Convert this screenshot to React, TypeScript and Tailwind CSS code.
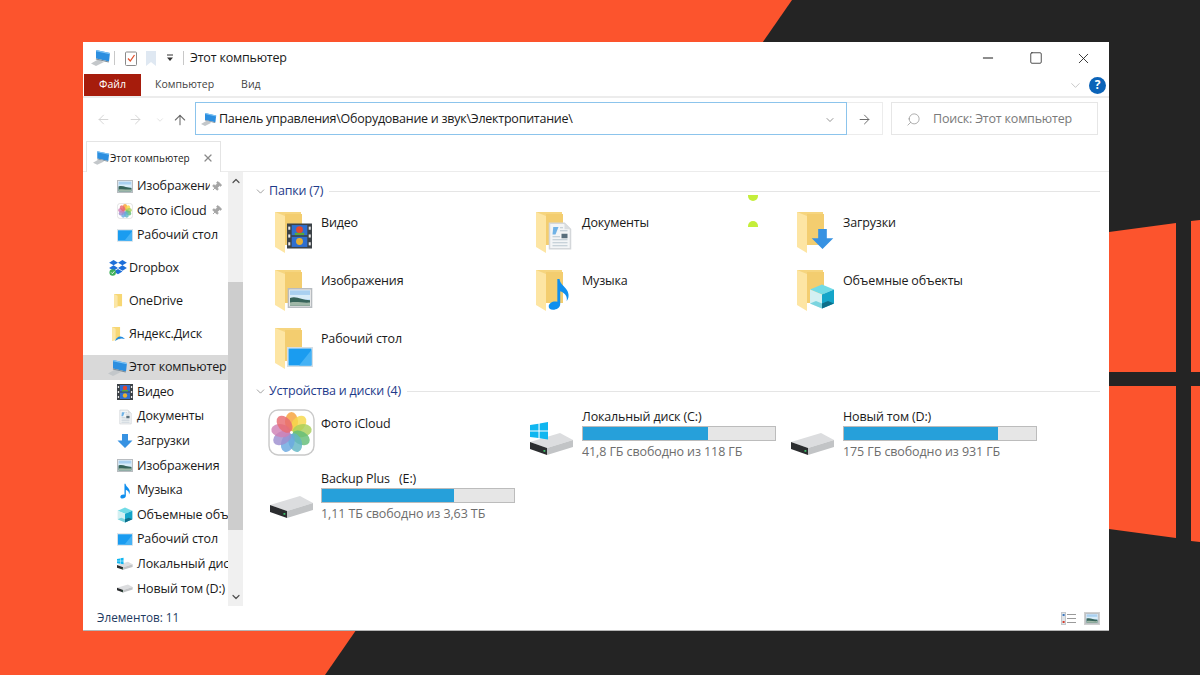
import React from 'react';
import { ArrowLeft, ArrowRight, ArrowUp, ChevronDown, ChevronUp, Minus, Pin, Search, Square, X } from 'lucide-react';

const font = { fontFamily: '"Open Sans", "Noto Sans", sans-serif' };

function Pc({ className = '' }: { className?: string }) {
  return (
    <svg viewBox="0 0 20 16" className={className}>
      <path d="M0 13.5 L7 9.5 L13 12 L5 16 Z" fill="#c3c7ca" />
      <path d="M5 0 L19 3 L18 11.5 L5 8.5 Z" fill="#2c8fe0" />
      <path d="M5 0 L19 3 L18.9 4.2 L5 1.2 Z" fill="#7fc4f5" />
      <path d="M5 8.5 L18 11.5 L17.6 12.4 L4.8 9.4 Z" fill="#7d8c97" />
    </svg>
  );
}

function Pictures({ className = '' }: { className?: string }) {
  return (
    <svg viewBox="0 0 16 13" className={className}>
      <rect x="0.5" y="0.5" width="15" height="12" fill="#f4f4f4" stroke="#b8bcc0" />
      <rect x="1.5" y="1.5" width="13" height="10" fill="#a9d0f0" />
      <rect x="1.5" y="4.5" width="13" height="3" fill="#d8ecf8" />
      <path d="M1.5 6.5 C6 5 9 8 14.5 8 V11.5 H1.5 Z" fill="#37645a" />
      <path d="M1.5 9.5 C6 8.5 10 10 14.5 9.5 V11.5 H1.5 Z" fill="#9fb7a7" />
    </svg>
  );
}

function Film({ className = '' }: { className?: string }) {
  return (
    <svg viewBox="0 0 16 16" className={className}>
      <rect width="16" height="16" fill="#3c4247" />
      <rect x="3" y="1" width="10" height="6.5" fill="#2f6fd0" />
      <rect x="3" y="8.5" width="10" height="6.5" fill="#2f6fd0" />
      <circle cx="8" cy="4" r="2.2" fill="#e2482e" />
      <circle cx="8" cy="11.5" r="2.2" fill="#e8b032" />
      <rect x="5" y="6" width="6" height="1.4" fill="#58a83c" />
      <rect x="0.8" y="2" width="1.3" height="2" fill="#e8e8e8" />
      <rect x="0.8" y="7" width="1.3" height="2" fill="#e8e8e8" />
      <rect x="0.8" y="12" width="1.3" height="2" fill="#e8e8e8" />
      <rect x="13.9" y="2" width="1.3" height="2" fill="#e8e8e8" />
      <rect x="13.9" y="7" width="1.3" height="2" fill="#e8e8e8" />
      <rect x="13.9" y="12" width="1.3" height="2" fill="#e8e8e8" />
    </svg>
  );
}

function Doc({ className = '' }: { className?: string }) {
  return (
    <svg viewBox="0 0 16 18" className={className}>
      <path d="M1 0.5 H11 L15 4.5 V17.5 H1 Z" fill="#f3f5f6" stroke="#d4d7da" />
      <path d="M11 0.5 L15 4.5 H11 Z" fill="#d9dde0" />
      <path d="M3.5 3 H7 L5 8 H3 Z" fill="#6fb2e6" />
      <path d="M3 9.5 H8 M3 11.5 H13 M3 13.5 H13 M3 15.5 H13 M8 3.5 H10 M8 5.5 H13" stroke="#b9c6d0" strokeWidth="0.8" />
      <rect x="9" y="7.5" width="4" height="3" fill="#596f7c" />
    </svg>
  );
}

function Down({ className = '' }: { className?: string }) {
  return (
    <svg viewBox="0 0 16 16" className={className}>
      <path d="M5 1 H11 V7.5 H15.5 L8 15 L0.5 7.5 H5 Z" fill="#3792e2" />
    </svg>
  );
}

function Note({ className = '' }: { className?: string }) {
  return (
    <svg viewBox="0 0 16 22" className={className}>
      <path d="M6.5 0.5 H8 C8.5 4 11 5 13 8 C15 11 14.5 14 13 16 C13.5 13 12.5 10.5 8.5 9 V18 C8.5 20.5 6 22 3.5 22 C1.5 22 0.3 20.8 0.5 19.3 C0.8 17 3.8 15.6 6.5 16.4 Z" fill="#0f8fee" />
    </svg>
  );
}

function Cube({ className = '' }: { className?: string }) {
  return (
    <svg viewBox="0 0 26 26" className={className}>
      <path d="M13 1 L25 6 L13 11 L1 6 Z" fill="#71dbe6" />
      <path d="M1 6 L13 11 V25 L1 20 Z" fill="#d3f0f2" />
      <path d="M25 6 L13 11 V25 L25 20 Z" fill="#14a5c9" />
      <path d="M1 20 L7 17.5 L13 20 V25 Z" fill="#7ad4df" />
      <path d="M25 20 L19 17.5 L13 20 V25 Z" fill="#0d6f8a" />
    </svg>
  );
}

function Desktop({ className = '' }: { className?: string }) {
  return (
    <svg viewBox="0 0 26 20" className={className}>
      <rect x="0.5" y="0.5" width="25" height="19" fill="#e8eef2" stroke="#d5dde2" />
      <rect x="1.5" y="1.5" width="23" height="17" fill="#1a9cf0" />
      <path d="M12 18.5 L24.5 3 V18.5 Z" fill="#45b2f5" />
    </svg>
  );
}

function DriveShape() {
  return (
    <>
      <path d="M0 20 L30 11 L43 18 L17 26 Z" fill="#dcdddf" />
      <path d="M0 20 L17 26 V33 L0 27 Z" fill="#2b2d2f" />
      <path d="M17 26 L43 18 V25 L17 33 Z" fill="#c2c4c6" />
      <rect x="13.5" y="28" width="1.8" height="1.8" fill="#3cc46a" />
    </>
  );
}

function WinDrive({ className = '' }: { className?: string }) {
  return (
    <svg viewBox="0 0 44 34" className={className}>
      <DriveShape />
      <path d="M0 3 L8.5 1.7 V8.4 H0 Z M9.6 1.5 L18 0 V8.4 H9.6 Z M0 9.4 H8.5 V16 L0 15 Z M9.6 9.4 H18 V17.4 L9.6 16.2 Z" fill="#10b6f0" />
    </svg>
  );
}

function Drive({ className = '' }: { className?: string }) {
  return (
    <svg viewBox="0 11 44 22" className={className}>
      <DriveShape />
    </svg>
  );
}

// цветок Фото iCloud
function Flower({ className = '' }: { className?: string }) {
  const petals = ['#f6a13a', '#f6d84a', '#a8d05a', '#63bd78', '#62b6c4', '#6aa8e0', '#9d8fd0', '#cf80b4', '#e86a70'];
  return (
    <svg viewBox="0 0 46 46" className={className}>
      <rect x="1" y="1" width="44" height="44" rx="9" fill="#fff" stroke="#c9c9c9" strokeWidth="1.4" />
      {petals.map((c, i) => (
        <ellipse key={i} cx="23" cy="12.5" rx="6.4" ry="9.5" fill={c} opacity="0.82" transform={`rotate(${(i * 360) / 9} 23 23)`} />
      ))}
      <circle cx="23" cy="23" r="1.4" fill="#fff" />
    </svg>
  );
}

function Folder({ small = false, children }: { small?: boolean; children?: React.ReactNode }) {
  if (small) {
    return (
      <svg viewBox="0 0 12 18" className="w-[11px] h-[16px]">
        <path d="M1 1 H10 V15 H4 L1 17 Z" fill="#f7d774" />
        <path d="M1 1 L5 3 V16 L1 17 Z" fill="#fbe6a6" />
      </svg>
    );
  }
  return (
    <div className="relative w-[40px] h-[42px]">
      <svg viewBox="0 0 27 42" className="w-[27px] h-[42px]">
        <path d="M0 0 H26 V32 H9 V36 L0 30 Z" fill="#f6d57f" />
        <path d="M10 2 H27 V33 H10 Z" fill="#f3cd6f" />
        <path d="M0 0 L10 4 V41 L0 35 Z" fill="#fde5a3" />
      </svg>
      <div className="absolute left-[12px] top-[10px]">{children}</div>
    </div>
  );
}

type NavItem = { label: string; icon: React.ReactNode; pin?: boolean; rowClass: string };

const navIcon = 'w-[16px] h-[16px]';
const plain = 'h-[24.6px] pl-[34px]';
const group = 'h-[33px] pl-[25px]';

const nav: NavItem[] = [
  { label: 'Изображения', icon: <Pictures className="w-[16px] h-[13px]" />, pin: true, rowClass: plain },
  { label: 'Фото iCloud', icon: <Flower className={navIcon} />, pin: true, rowClass: plain },
  { label: 'Рабочий стол', icon: <Desktop className="w-[16px] h-[13px]" />, rowClass: plain },
  { label: 'Dropbox', icon: <svg viewBox="0 0 20 18" className="w-[18px] h-[16px]"><path d="M5 0 L10 3 L5 6 L0 3 Z M15 0 L20 3 L15 6 L10 3 Z M5 6 L10 9 L5 12 L0 9 Z M15 6 L20 9 L15 12 L10 9 Z M5 13 L10 10 L15 13 L10 16 Z" fill="#1e6fd9" /><circle cx="4" cy="14" r="3.6" fill="#3fb05a" /><path d="M2.3 14 L3.7 15.4 L5.9 12.7" stroke="#fff" strokeWidth="1" fill="none" /></svg>, rowClass: `${group} mt-[4px]` },
  { label: 'OneDrive', icon: <Folder small />, rowClass: group },
  { label: 'Яндекс.Диск', icon: <span className="relative block w-[14px] h-[16px]"><Folder small /><svg viewBox="0 0 10 6" className="absolute left-[4px] top-[9px] w-[10px] h-[6px]"><path d="M0 6 C2 1 6 0 10 4 C7 3 4 3 0 6 Z" fill="#1f8be0" /></svg></span>, rowClass: group },
  { label: 'Этот компьютер', icon: <Pc className="w-[20px] h-[16px]" />, rowClass: 'h-[24.6px] pl-[25px] mt-[4.5px] bg-[#d9d9d9]' },
  { label: 'Видео', icon: <Film className={navIcon} />, rowClass: plain },
  { label: 'Документы', icon: <Doc className="w-[13px] h-[16px]" />, rowClass: plain },
  { label: 'Загрузки', icon: <Down className={navIcon} />, rowClass: plain },
  { label: 'Изображения', icon: <Pictures className="w-[16px] h-[13px]" />, rowClass: plain },
  { label: 'Музыка', icon: <Note className="w-[11px] h-[16px]" />, rowClass: plain },
  { label: 'Объемные объекты', icon: <Cube className={navIcon} />, rowClass: plain },
  { label: 'Рабочий стол', icon: <Desktop className="w-[16px] h-[13px]" />, rowClass: plain },
  { label: 'Локальный диск (C:)', icon: <WinDrive className="w-[18px] h-[14px]" />, rowClass: plain },
  { label: 'Новый том (D:)', icon: <Drive className="w-[16px] h-[9px]" />, rowClass: plain },
];

function Sidebar() {
  return (
    <div className="relative w-[162px] shrink-0 flex">
      <div className="w-[145px] pt-[2px] overflow-hidden">
        {nav.map((item, i) => (
          <div key={i} className={`flex items-center whitespace-nowrap overflow-hidden ${item.rowClass}`}>
            <span className={`flex justify-center items-center shrink-0 ${item.rowClass.includes('pl-[34px]') ? 'w-[16px] mr-[4px]' : 'w-[20px] mr-[1px]'}`}>{item.icon}</span>
            <span className={`text-[12.5px] tracking-[-0.15px] text-[#1a1a1a] ${item.pin ? 'w-[73px] overflow-hidden' : ''}`}>{item.label}</span>
            {item.pin && <Pin size={11} className="ml-[1px] text-[#a5a5a5] fill-[#a5a5a5] rotate-45 shrink-0" />}
          </div>
        ))}
      </div>
      <div className="w-[15px] h-[434px] bg-[#f0f0f0] flex flex-col items-center">
        <div className="h-[18px] flex items-center"><ChevronUp size={12} strokeWidth={2.4} className="text-[#505050]" /></div>
        <div className="mt-[92px] h-[248px] w-full bg-[#cdcdcd]" />
        <div className="mt-auto h-[18px] flex items-center"><ChevronDown size={12} strokeWidth={2.4} className="text-[#505050]" /></div>
      </div>
    </div>
  );
}

function SectionHead({ title, className = '' }: { title: string; className?: string }) {
  return (
    <div className={`flex items-center h-[19px] ${className}`}>
      <ChevronDown size={13} strokeWidth={1.3} className="ml-[9px] mr-[2px] text-[#7a7a7a]" />
      <span className="text-[12.5px] tracking-[-0.2px] text-[#1e3a8a] mr-[6px]">{title}</span>
      <div className="flex-1 h-px bg-[#e5e5e5] mr-[9px]" />
    </div>
  );
}

function FolderTile({ name, overlay }: { name: string; overlay: React.ReactNode }) {
  return (
    <div className="flex pl-[6px] pt-[6px] h-[58px]">
      <Folder>{overlay}</Folder>
      <span className="ml-[6px] mt-[2px] text-[12.5px] tracking-[-0.15px] leading-[18px] text-[#1a1a1a]">{name}</span>
    </div>
  );
}

function DriveTile({ name, pct, free, icon }: { name: string; pct: number; free: string; icon: React.ReactNode }) {
  return (
    <div className="flex h-[62px] pt-[2px]">
      <div className="w-[52px] shrink-0">{icon}</div>
      <div className="w-[194px]">
        <div className="text-[12.5px] tracking-[-0.15px] leading-[18px] text-[#1a1a1a] whitespace-pre">{name}</div>
        <div className="h-[15px] bg-[#e6e6e6] border border-[#bcbcbc]">
          <div className="h-full bg-[#26a0da]" style={{ width: `${pct}%` }} />
        </div>
        <div className="text-[12.5px] tracking-[-0.1px] leading-[22px] text-[#6d6d6d]">{free}</div>
      </div>
    </div>
  );
}

function Content() {
  return (
    <div className="relative flex-1 pt-[10px]">
      <SectionHead title="Папки (7)" />
      <div className="grid grid-cols-[261px_261px_261px] pl-[24px] pt-[5px]">
        <FolderTile name="Видео" overlay={<Film className="w-[25px] h-[28px]" />} />
        <FolderTile name="Документы" overlay={<Doc className="w-[24px] h-[28px]" />} />
        <FolderTile name="Загрузки" overlay={<Down className="w-[23px] h-[24px] ml-[2px] mt-[5px]" />} />
        <FolderTile name="Изображения" overlay={<Pictures className="w-[26px] h-[20px] mt-[8px]" />} />
        <FolderTile name="Музыка" overlay={<Note className="w-[23px] h-[36px] -mt-[4px]" />} />
        <FolderTile name="Объемные объекты" overlay={<Cube className="w-[26px] h-[27px] mt-[3px]" />} />
        <FolderTile name="Рабочий стол" overlay={<Desktop className="w-[26px] h-[20px] mt-[9px]" />} />
      </div>
      <SectionHead title="Устройства и диски (4)" className="mt-[2px]" />
      <div className="grid grid-cols-[261px_261px_261px] pl-[24px] pt-[5px]">
        <div className="flex h-[62px]">
          <Flower className="w-[47px] h-[47px] shrink-0 mt-[3px] -ml-[1px]" />
          <span className="ml-[6px] mt-[9px] text-[12.5px] tracking-[-0.15px] leading-[18px] text-[#1a1a1a]">Фото iCloud</span>
        </div>
        <DriveTile name="Локальный диск (C:)" pct={65} free="41,8 ГБ свободно из 118 ГБ" icon={<WinDrive className="w-[44px] h-[34px] mt-[14px]" />} />
        <DriveTile name="Новый том (D:)" pct={80} free="175 ГБ свободно из 931 ГБ" icon={<Drive className="w-[44px] h-[22px] mt-[25px]" />} />
        <DriveTile name="Backup Plus   (E:)" pct={68.5} free="1,11 ТБ свободно из 3,63 ТБ" icon={<Drive className="w-[44px] h-[22px] ml-[1px] mt-[26px]" />} />
      </div>
      {/* зеленые точки поверх окна */}
      <div className="absolute left-[503px] top-[23px] w-[10px] h-[6px] rounded-b-full bg-[#c4ee3a]" />
      <div className="absolute left-[503px] top-[49px] w-[10px] h-[6px] rounded-t-full bg-[#c4ee3a]" />
    </div>
  );
}

export default function App() {
  return (
    <div className="relative w-[1200px] h-[675px] overflow-hidden bg-[#242424]" style={font}>
      <svg viewBox="0 0 1200 675" className="absolute inset-0 w-[1200px] h-[675px]">
        <path d="M0 0 H792 L325 675 H0 Z" fill="#fc542d" />
        <path d="M1109 232 L1176 223 V372 H1109 Z M1191 221 L1200 220 V372 H1191 Z M1109 386 H1176 V538 L1109 529 Z M1191 386 H1200 V542 L1191 541 Z" fill="#fc542d" />
      </svg>
      <div className="relative pl-[83px] pt-[42px]">
        <div className="w-[1026px] h-[589px] bg-white flex flex-col border-b border-[#b5b5b5]">
          {/* заголовок */}
          <div className="h-[32px] flex items-center shrink-0">
            <Pc className="ml-[8px] w-[20px] h-[16px]" />
            <div className="ml-[3px] w-px h-[14px] bg-[#c8c8c8]" />
            <svg viewBox="0 0 12 15" className="ml-[10px] w-[12px] h-[15px]"><rect x="0.5" y="1" width="11" height="13.5" rx="1" fill="#fff" stroke="#8a8a8a" /><path d="M3 7.5 L5.3 10 L9.5 4" stroke="#e2522e" strokeWidth="1.3" fill="none" /></svg>
            <svg viewBox="0 0 10 15" className="ml-[9px] w-[10px] h-[15px]"><path d="M0 0 H10 V15 L5 11 L0 15 Z" fill="#dfe8f2" /></svg>
            <svg viewBox="0 0 8 8" className="ml-[10px] w-[8px] h-[8px]"><path d="M1 1 H7" stroke="#333" /><path d="M1 3.5 H7 L4 7 Z" fill="#333" /></svg>
            <div className="ml-[9px] w-px h-[14px] bg-[#c8c8c8]" />
            <span className="ml-[6px] text-[12.5px] tracking-[-0.2px] text-[#1a1a1a]">Этот компьютер</span>
            <div className="ml-auto flex items-center text-[#1a1a1a]">
              <Minus size={16} strokeWidth={1.5} className="mr-[33px]" />
              <Square size={14} strokeWidth={1.3} className="mr-[32px]" />
              <X size={17} strokeWidth={1.2} className="mr-[17px]" />
            </div>
          </div>
          {/* вкладки ленты */}
          <div className="h-[22px] flex items-stretch border-b-[2px] border-[#ececec] box-content shrink-0">
            <div className="ml-px w-[57px] bg-[#a61c0c] text-white text-[10.5px] flex items-center justify-center">Файл</div>
            <div className="ml-[14px] text-[10.5px] text-[#444] flex items-center">Компьютер</div>
            <div className="ml-[27px] text-[10.5px] text-[#444] flex items-center">Вид</div>
            <div className="ml-auto flex items-center">
              <ChevronDown size={15} strokeWidth={1.2} className="text-[#b5b5b5] mr-[6px]" />
              <div className="w-[17px] h-[17px] mr-[3px] rounded-full bg-[#0b63b8] text-white text-[12px] font-bold flex items-center justify-center">?</div>
            </div>
          </div>
          {/* адресная строка */}
          <div className="h-[33px] mt-[4px] flex items-stretch shrink-0">
            <div className="w-[112px] flex items-center pl-[13px] pt-[2px]">
              <ArrowLeft size={15} strokeWidth={1.4} className="text-[#cfcfcf]" />
              <ArrowRight size={15} strokeWidth={1.4} className="ml-[17px] text-[#cfcfcf]" />
              <ChevronDown size={10} strokeWidth={1.4} className="ml-[12px] text-[#cfcfcf]" />
              <ArrowUp size={16} strokeWidth={1.6} className="ml-[7px] text-[#6d6d6d]" />
            </div>
            <div className="w-[652px] border-[1.5px] border-[#8cc4ec] flex items-center pl-[5px] pt-[2px]">
              <Pc className="w-[16px] h-[13px]" />
              <span className="ml-[2px] text-[12.5px] tracking-[-0.25px] text-[#1a1a1a]">Панель управления\Оборудование и звук\Электропитание\</span>
              <ChevronDown size={12} strokeWidth={1.4} className="ml-auto mr-[10px] text-[#666]" />
            </div>
            <div className="w-[36px] border border-l-0 border-[#ececec] flex items-center justify-center pt-[2px]">
              <ArrowRight size={15} strokeWidth={1.6} className="text-[#6d6d6d]" />
            </div>
            <div className="ml-[8px] w-[207px] border border-[#e6e6e6] flex items-center pl-[14px] pt-[2px]">
              <Search size={15} strokeWidth={1.1} className="text-[#8a8a8a] -scale-x-100" />
              <span className="ml-[12px] text-[12.5px] tracking-[-0.2px] text-[#7a7a7a]">Поиск: Этот компьютер</span>
            </div>
          </div>
          {/* вкладка проводника */}
          <div className="h-[32px] mt-[5px] flex items-end border-b border-[#ececec] shrink-0">
            <div className="ml-[3px] w-[135px] h-[31px] -mb-px bg-white border border-b-0 border-[#e4e4e4] flex items-center pl-[6px] pt-[2px]">
              <Pc className="w-[17px] h-[14px]" />
              <span className="text-[10px] text-[#1a1a1a]">Этот компьютер</span>
              <X size={12} strokeWidth={2.4} className="ml-auto mr-[6px] text-[#8a8a8a]" />
            </div>
          </div>
          {/* основная область */}
          <div className="flex-1 flex min-h-0">
            <Sidebar />
            <Content />
          </div>
          {/* строка состояния */}
          <div className="h-[24px] flex items-center shrink-0">
            <span className="ml-[14px] text-[11.75px] text-[#1e3a5f]">Элементов: 11</span>
            <svg viewBox="0 0 16 13" className="ml-auto w-[16px] h-[13px]"><rect x="0.5" y="0.5" width="4" height="12" fill="#e0e4e8" stroke="#c4c8cc" /><path d="M6 2.5 H15 M6 6.5 H15 M6 10.5 H15" stroke="#9a9a9a" /><rect x="1.6" y="2" width="2" height="2" fill="#3c78c0" /><rect x="1.6" y="9" width="2" height="2" fill="#d83c2c" /></svg>
            <div className="ml-[7px] mr-[9px] p-px bg-[#cfcfcf]"><Pictures className="w-[14px] h-[11px]" /></div>
          </div>
        </div>
      </div>
    </div>
  );
}
